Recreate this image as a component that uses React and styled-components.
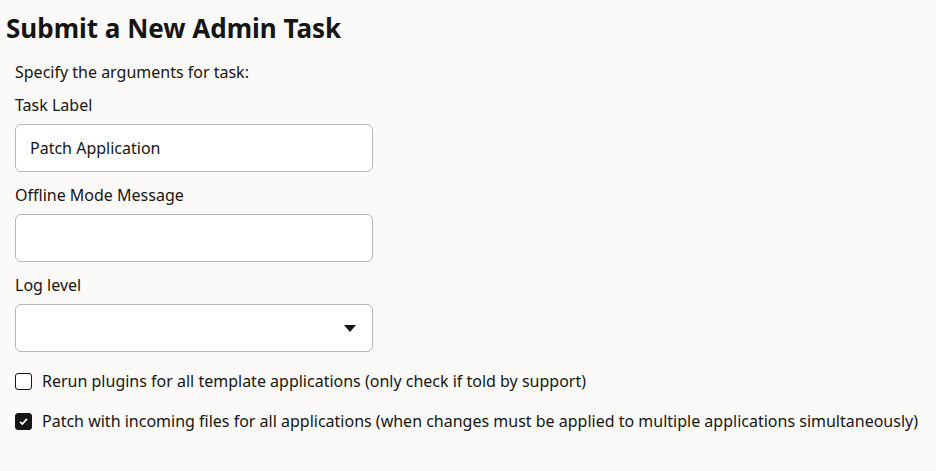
import React, { useState } from 'react';
import styled, { createGlobalStyle } from 'styled-components';

const GlobalStyle = createGlobalStyle`
  html, body {
    margin: 0;
    padding: 0;
    background: #fbfaf9;
  }
  body {
    font-family: "Noto Sans", "Open Sans", Arial, sans-serif;
    color: #161513;
  }
`;

const Page = styled.div`
  padding: 11px 0 0 6px;
  height: 460px;
`;

const Title = styled.h1`
  margin: 0;
  font-size: 26px;
  font-weight: 700;
  line-height: 34px;
  color: #161513;
`;

const Form = styled.div`
  display: flex;
  flex-direction: column;
  padding: 15px 0 0 9px;
`;

const Intro = styled.div`
  font-size: 16px;
  line-height: 24px;
  margin-bottom: 9px;
`;

const Label = styled.div`
  font-size: 16px;
  line-height: 24px;
  margin-bottom: 7px;
`;

const Field = styled.div`
  position: relative;
  width: 358px;
  height: 48px;
  margin-bottom: 11px;
`;

const Input = styled.input`
  box-sizing: border-box;
  width: 100%;
  height: 100%;
  border: 1px solid #b9b7b4;
  border-radius: 6px;
  background: #fff;
  padding: 0 14px;
  font-family: inherit;
  font-size: 16px;
  color: #161513;
  outline: none;
`;

const Caret = styled.svg`
  position: absolute;
  right: 17px;
  top: 21px;
  pointer-events: none;
`;

const Checks = styled.div`
  display: flex;
  flex-direction: column;
  gap: 16px;
  margin-top: 6px;
`;

const CheckRow = styled.label`
  display: flex;
  align-items: center;
  gap: 10px;
  font-size: 16px;
  line-height: 24px;
  cursor: pointer;
`;

const Box = styled.span`
  box-sizing: border-box;
  width: 17px;
  height: 17px;
  border-radius: 3px;
  border: 1.5px solid #161513;
  background: ${(p) => (p.$checked ? '#161513' : '#fff')};
  display: flex;
  align-items: center;
  justify-content: center;
  flex-shrink: 0;
`;

function Checkbox({ checked, onToggle, children }) {
  return (
    <CheckRow onClick={onToggle}>
      <Box $checked={checked}>
        {checked && (
          <svg width="11" height="11" viewBox="0 0 11 11">
            <path d="M2 5.8 L4.4 8 L9 2.8" fill="none" stroke="#fff" strokeWidth="1.8" />
          </svg>
        )}
      </Box>
      <span>{children}</span>
    </CheckRow>
  );
}

export default function App() {
  const [label, setLabel] = useState('Patch Application');
  const [message, setMessage] = useState('');
  const [rerun, setRerun] = useState(false);
  const [patchAll, setPatchAll] = useState(true);

  return (
    <Page>
      <GlobalStyle />
      <Title>Submit a New Admin Task</Title>
      <Form>
        <Intro>Specify the arguments for task:</Intro>
        <Label>Task Label</Label>
        <Field>
          <Input value={label} onChange={(e) => setLabel(e.target.value)} />
        </Field>
        <Label>Offline Mode Message</Label>
        <Field>
          <Input value={message} onChange={(e) => setMessage(e.target.value)} />
        </Field>
        <Label>Log level</Label>
        <Field>
          <Input readOnly value="" />
          <Caret width="12" height="7" viewBox="0 0 12 7">
            <path d="M0 0 L12 0 L6 7 Z" fill="#161513" />
          </Caret>
        </Field>
        <Checks>
          <Checkbox checked={rerun} onToggle={() => setRerun(!rerun)}>
            Rerun plugins for all template applications (only check if told by support)
          </Checkbox>
          <Checkbox checked={patchAll} onToggle={() => setPatchAll(!patchAll)}>
            Patch with incoming files for all applications (when changes must be applied to multiple applications simultaneously)
          </Checkbox>
        </Checks>
      </Form>
    </Page>
  );
}
